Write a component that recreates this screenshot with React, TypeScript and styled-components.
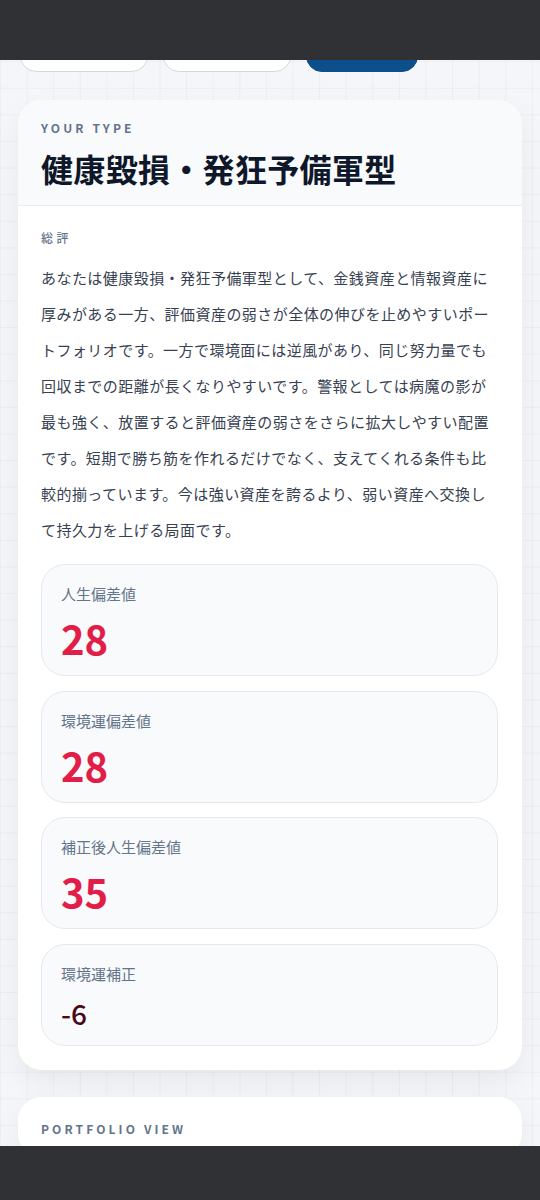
import React from 'react';
import styled, { createGlobalStyle } from 'styled-components';

const GlobalStyle = createGlobalStyle`
  * { box-sizing: border-box; }
  body {
    margin: 0;
    background-color: #f4f6f9;
    background-image:
      linear-gradient(to right, rgba(15, 23, 42, 0.035) 1px, transparent 1px),
      linear-gradient(to bottom, rgba(15, 23, 42, 0.035) 1px, transparent 1px);
    background-size: 26.6px 26.6px;
    background-position: 0 8px;
    font-family: 'Noto Sans CJK JP', 'Noto Sans', sans-serif;
    color: #0f172a;
  }
`;

const SystemBar = styled.div<{ $bottom?: boolean }>`
  position: fixed;
  left: 0;
  right: 0;
  ${(p) => (p.$bottom ? 'bottom: 0; height: 54px;' : 'top: 0; height: 60px;')}
  background: #303134;
  z-index: 10;
`;

const Page = styled.main`
  padding: 28px 18px 80px;
`;

const Tabs = styled.div`
  display: flex;
  gap: 15px;
  padding-left: 2px;
  margin-bottom: 28px;
`;

const Tab = styled.button<{ $active?: boolean; $w: number }>`
  width: ${(p) => p.$w}px;
  height: 44px;
  border-radius: 16px;
  border: 1px solid ${(p) => (p.$active ? '#0d4f8b' : '#d5d9df')};
  background: ${(p) => (p.$active ? '#0d4f8b' : '#ffffff')};
`;

const Card = styled.section`
  background: #ffffff;
  border-radius: 24px;
  box-shadow: 0 12px 30px rgba(15, 23, 42, 0.06);
  overflow: hidden;
  margin-bottom: 27px;
`;

const CardHeader = styled.header<{ $plain?: boolean }>`
  padding: ${(p) => (p.$plain ? '24px 23px 20px' : '20px 23px 17px')};
  background: ${(p) => (p.$plain ? '#ffffff' : '#f8fafc')};
  border-bottom: ${(p) => (p.$plain ? 'none' : '1px solid #e8ecf1')};
`;

const Eyebrow = styled.div`
  font-size: 12px;
  line-height: 16px;
  font-weight: 700;
  letter-spacing: 0.26em;
  color: #64748b;
`;

const Title = styled.h1`
  margin: 12px 0 0;
  font-size: 32px;
  line-height: 40px;
  font-weight: 700;
  letter-spacing: 0.01em;
  color: #0f172a;
`;

const CardBody = styled.div`
  padding: 24px 24px 24px 23px;
`;

const SectionLabel = styled.div`
  font-size: 12px;
  line-height: 16px;
  font-weight: 500;
  letter-spacing: 0.3em;
  color: #64748b;
  margin-bottom: 14px;
`;

const Summary = styled.p`
  margin: 0 0 16px;
  font-size: 15px;
  line-height: 36px;
  letter-spacing: 0.03em;
  color: #374151;
`;

const Stats = styled.div`
  display: flex;
  flex-direction: column;
  gap: 14.5px;
`;

const Stat = styled.div`
  background: #f8fafc;
  border: 1px solid #e5e9ef;
  border-radius: 24px;
  padding: 18px 19px 15px;
`;

const StatLabel = styled.div`
  font-size: 15px;
  line-height: 22px;
  color: #64748b;
`;

const StatValue = styled.div<{ $small?: boolean }>`
  margin-top: 11px;
  font-size: ${(p) => (p.$small ? '28px' : '40px')};
  line-height: ${(p) => (p.$small ? '34px' : '44px')};
  font-weight: ${(p) => (p.$small ? 500 : 600)};
  color: ${(p) => (p.$small ? '#4c0519' : '#e11d48')};
`;

const stats = [
  { label: '人生偏差値', value: '28' },
  { label: '環境運偏差値', value: '28' },
  { label: '補正後人生偏差値', value: '35' },
  { label: '環境運補正', value: '-6', small: true },
];

export default function App() {
  return (
    <>
      <GlobalStyle />
      <SystemBar />
      <Page>
        <Tabs>
          <Tab $w={128} />
          <Tab $w={128} />
          <Tab $w={112} $active />
        </Tabs>
        <Card>
          <CardHeader>
            <Eyebrow>YOUR TYPE</Eyebrow>
            <Title>健康毀損・発狂予備軍型</Title>
          </CardHeader>
          <CardBody>
            <SectionLabel>総評</SectionLabel>
            <Summary>
              あなたは健康毀損・発狂予備軍型として、金銭資産と情報資産に厚みがある一方、評価資産の弱さが全体の伸びを止めやすいポートフォリオです。一方で環境面には逆風があり、同じ努力量でも回収までの距離が長くなりやすいです。警報としては病魔の影が最も強く、放置すると評価資産の弱さをさらに拡大しやすい配置です。短期で勝ち筋を作れるだけでなく、支えてくれる条件も比較的揃っています。今は強い資産を誇るより、弱い資産へ交換して持久力を上げる局面です。
            </Summary>
            <Stats>
              {stats.map((s) => (
                <Stat key={s.label}>
                  <StatLabel>{s.label}</StatLabel>
                  <StatValue $small={s.small}>{s.value}</StatValue>
                </Stat>
              ))}
            </Stats>
          </CardBody>
        </Card>
        <Card>
          <CardHeader $plain>
            <Eyebrow>PORTFOLIO VIEW</Eyebrow>
          </CardHeader>
        </Card>
      </Page>
      <SystemBar $bottom />
    </>
  );
}
